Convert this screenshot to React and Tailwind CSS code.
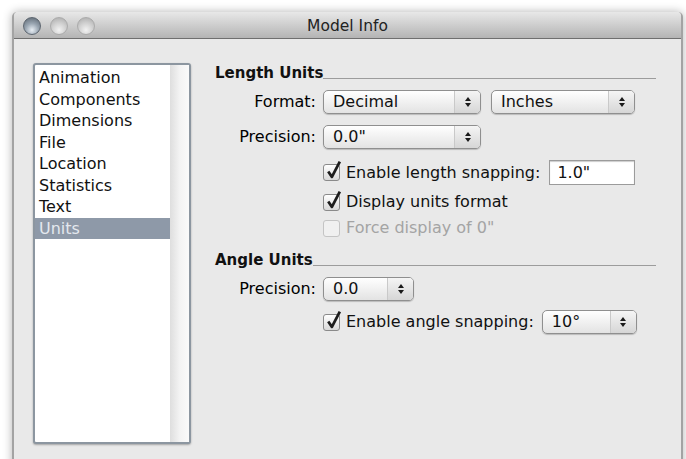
import { useState } from 'react';

const panels = ['Animation', 'Components', 'Dimensions', 'File', 'Location', 'Statistics', 'Text', 'Units'];

function Light({ active }) {
  return (
    <span
      className={`block w-[18px] h-[18px] rounded-full border ${
        active
          ? 'border-[#5d6670] bg-[radial-gradient(circle_at_50%_75%,#e8eef4_0%,#9aa6b2_45%,#58626d_100%)]'
          : 'border-[#ababab] bg-[radial-gradient(circle_at_50%_75%,#f2f2f2_0%,#cfcfcf_50%,#a8a8a8_100%)]'
      }`}
    />
  );
}

function Arrows() {
  return (
    <svg width="8" height="12" viewBox="0 0 8 12">
      <path d="M4 1 L7 5 L1 5 Z" fill="#1a1a1a" />
      <path d="M4 11 L7 7 L1 7 Z" fill="#1a1a1a" />
    </svg>
  );
}

function Popup({ value, width }) {
  return (
    <div
      className={`${width} h-[24px] flex items-stretch rounded-[5px] border border-[#8f8f8f] bg-gradient-to-b from-white to-[#e3e3e3] shadow-[0_1px_1px_rgba(0,0,0,0.2)]`}
    >
      <span className="flex-1 pl-[9px] leading-[22px] text-[#111]">{value}</span>
      <span className="w-[26px] flex items-center justify-center border-l border-[#c9c9c9] rounded-r-[4px] bg-gradient-to-b from-[#f5f5f5] to-[#d6d6d6]">
        <Arrows />
      </span>
    </div>
  );
}

function Check({ checked, disabled, label }) {
  return (
    <div className="flex items-center gap-[6px]">
      <span
        className={`relative w-[17px] h-[17px] rounded-[3px] border ${
          disabled ? 'border-[#c4c4c4] bg-[#f0f0f0]' : 'border-[#8a8a8a] bg-gradient-to-b from-white to-[#d9d9d9]'
        }`}
      >
        {checked && (
          <svg className="absolute left-[1px] top-[-5px]" width="17" height="20" viewBox="0 0 16 19">
            <path d="M3 11 L6.5 16 L14 1.5" fill="none" stroke="#1c1c1c" strokeWidth="2.6" strokeLinejoin="round" />
          </svg>
        )}
      </span>
      <span className={disabled ? 'text-[#a4a4a4]' : 'text-[#111]'}>{label}</span>
    </div>
  );
}

function Section({ title }) {
  return (
    <div className="flex items-end h-[18px]">
      <span className="font-bold text-[15px] leading-[18px] text-[#111]">{title}</span>
      <span className="flex-1 border-b border-[#9c9c9c] mb-[3px]" />
    </div>
  );
}

export default function App() {
  const [selected, setSelected] = useState('Units');

  return (
    <div className="w-[686px] h-[459px] overflow-hidden bg-white pl-[12px] pt-[12px] pr-[3px] font-['DejaVu_Sans',sans-serif] text-[16px]">
      <div className="h-[460px] flex flex-col rounded-t-[5px] border-x-2 border-[#a3a3a3] bg-[#e9e9e9] shadow-[0_0_10px_rgba(0,0,0,0.3)]">
        {/* title bar */}
        <div className="relative h-[27px] flex items-center rounded-t-[4px] border-b border-[#6f6f6f] bg-gradient-to-b from-[#e8e8e8] to-[#b4b4b4]">
          <div className="flex gap-[9px] pl-[9px] pt-[1px]">
            <Light active />
            <Light />
            <Light />
          </div>
          <span className="absolute inset-x-0 top-[4px] text-center text-[15.5px] leading-[20px] text-[#222]">
            Model Info
          </span>
        </div>

        <div className="flex pt-[24px] pl-[19px]">
          {/* panel list */}
          <div className="w-[158px] h-[381px] flex rounded-[3px] border-2 border-[#8c96a0] bg-white shadow-[0_1px_2px_rgba(0,0,0,0.3)]">
            <ul className="flex-1 pt-[2px]">
              {panels.map((p) => (
                <li
                  key={p}
                  onClick={() => setSelected(p)}
                  className={`h-[21.5px] leading-[21.5px] pl-[4px] ${
                    selected === p ? 'bg-[#8e99a8] text-[#e4e8ee]' : 'text-[#111]'
                  }`}
                >
                  {p}
                </li>
              ))}
            </ul>
            <div className="w-[19px] bg-gradient-to-r from-[#dedede] via-[#f3f3f3] to-[#fafafa]" />
          </div>

          {/* unit settings */}
          <div className="w-[441px] ml-[24px] pt-[1px]">
            <Section title="Length Units" />
            <div className="grid grid-cols-[101px_auto] gap-x-[7px] mt-[8px] items-center">
              <span className="text-right">Format:</span>
              <div className="flex gap-[10px]">
                <Popup value="Decimal" width="w-[158px]" />
                <Popup value="Inches" width="w-[144px]" />
              </div>
              <span className="text-right mt-[11px]">Precision:</span>
              <div className="mt-[11px]">
                <Popup value={'0.0"'} width="w-[158px]" />
              </div>
              <span />
              <div className="mt-[11px] flex items-center">
                <Check checked label="Enable length snapping:" />
                <input
                  readOnly
                  value={'1.0"'}
                  className="ml-[9px] w-[86px] h-[25px] px-[7px] border border-[#9b9b9b] bg-white shadow-[inset_0_1px_1px_rgba(0,0,0,0.2)] outline-none text-[#111]"
                />
              </div>
              <span />
              <div className="mt-[5px]">
                <Check checked label="Display units format" />
              </div>
              <span />
              <div className="mt-[2px]">
                <Check disabled label={'Force display of 0"'} />
              </div>
            </div>

            <div className="mt-[11px]">
              <Section title="Angle Units" />
            </div>
            <div className="grid grid-cols-[101px_auto] gap-x-[7px] mt-[8px] items-center">
              <span className="text-right">Precision:</span>
              <div>
                <Popup value="0.0" width="w-[91px]" />
              </div>
              <span />
              <div className="mt-[9px] flex items-center">
                <Check checked label="Enable angle snapping:" />
                <div className="ml-[8px]">
                  <Popup value="10°" width="w-[95px]" />
                </div>
              </div>
            </div>
          </div>
        </div>
      </div>
    </div>
  );
}
